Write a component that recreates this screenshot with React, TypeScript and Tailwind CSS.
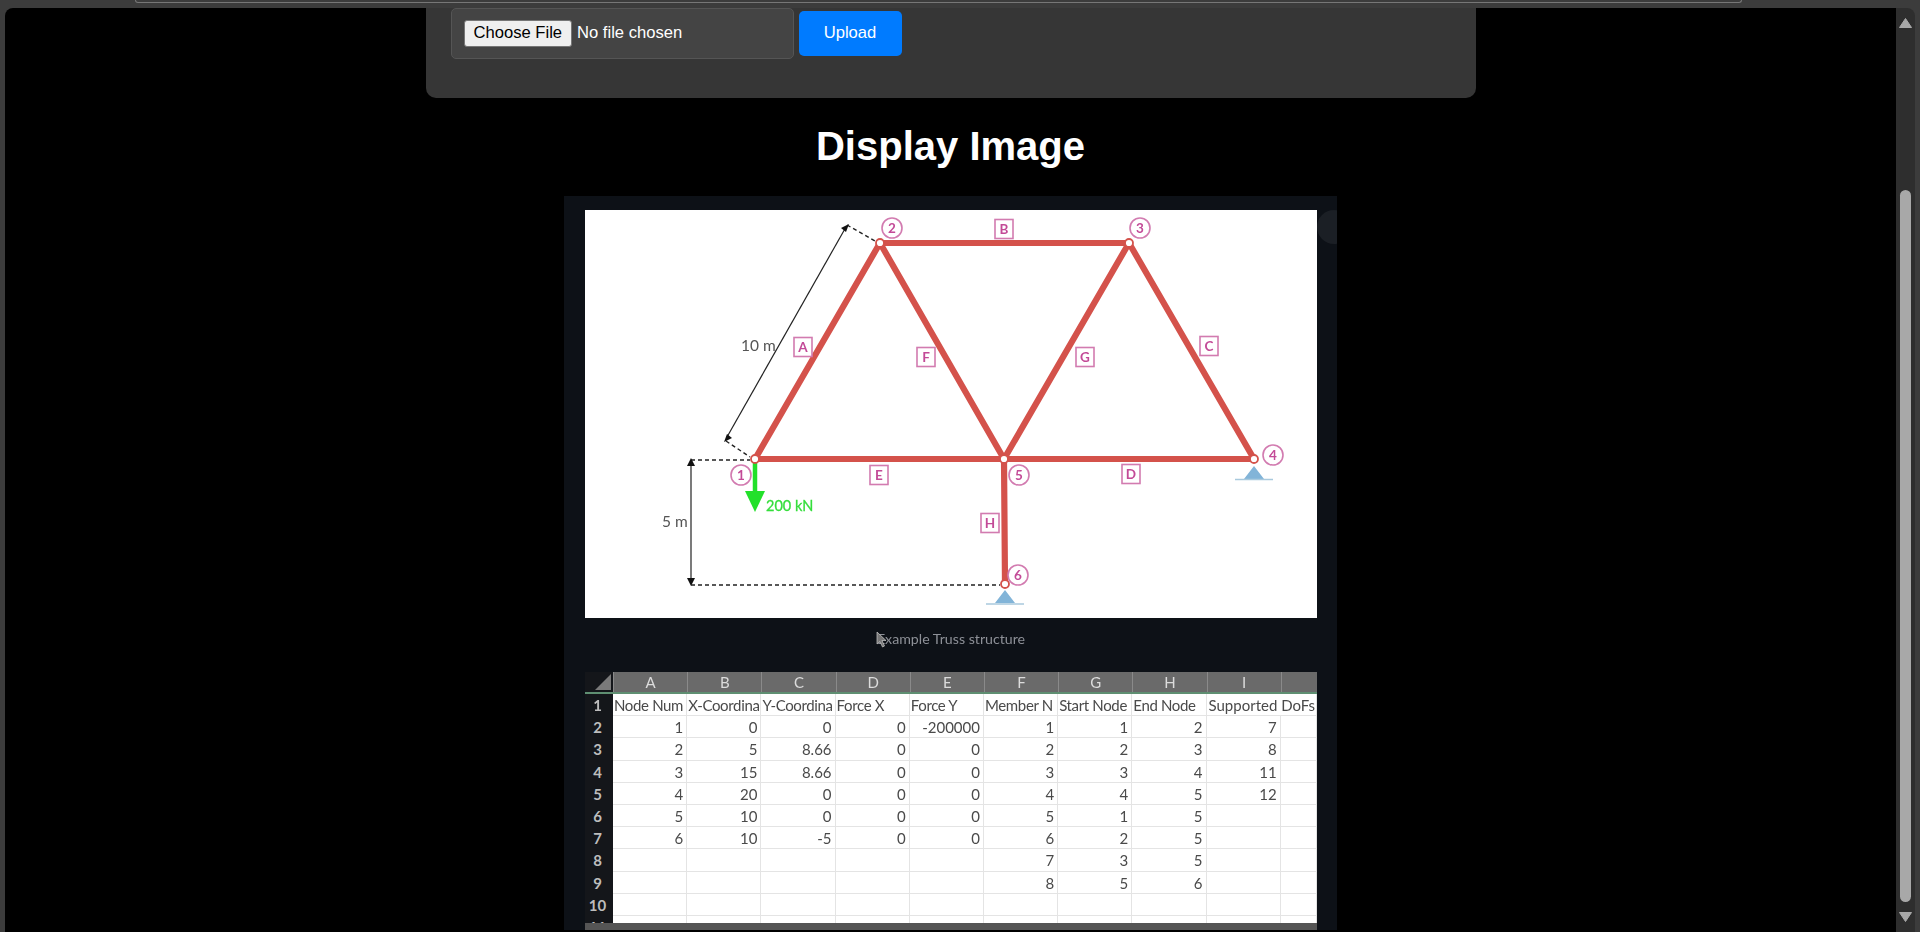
import React from "react";

const FONT = "font-['Liberation_Sans',Arial,sans-serif]";
const SHEET = "font-['Lato','Noto_Sans',sans-serif]";

const circles: [string, number, number][] = [
  ["1", 741, 475],
  ["2", 892, 228],
  ["3", 1140, 228],
  ["4", 1273, 455],
  ["5", 1019, 475],
  ["6", 1018, 575],
];
const boxes: [string, number, number][] = [
  ["A", 803, 347],
  ["B", 1004, 229],
  ["C", 1209, 346],
  ["D", 1131, 474],
  ["E", 879, 475],
  ["F", 926, 357],
  ["G", 1085, 357],
  ["H", 990, 523],
];
const members: [number, number, number, number][] = [
  [755, 459, 880, 243],
  [880, 243, 1129, 243],
  [1129, 243, 1254, 459],
  [755, 459, 1254, 459],
  [880, 243, 1004, 459],
  [1129, 243, 1004, 459],
  [1004, 459, 1005, 584],
];
const nodes: [number, number][] = [
  [755, 459],
  [880, 243],
  [1129, 243],
  [1254, 459],
  [1004, 459],
  [1005, 584],
];

function Truss() {
  return (
    <svg viewBox="585 210 732 408" className="block w-[732px] h-[408px] bg-white blur-[0.6px]">
      <g stroke="#222" fill="none" strokeWidth="1.2">
        <path d="M727 437 L846 227" />
        <path d="M691 462 L691 582" />
      </g>
      <g stroke="#222" fill="none" strokeWidth="1.4" strokeDasharray="4 3">
        <path d="M847 225 L875 241" />
        <path d="M726 441 L750 457" />
        <path d="M691 460 L750 460" />
        <path d="M691 585 L1000 585" />
      </g>
      <g fill="#111">
        <path d="M849 224 L841 228 L846 232 Z" />
        <path d="M724 442 L732 438 L727 434 Z" />
        <path d="M691 458 L687 466 L695 466 Z" />
        <path d="M691 586 L687 578 L695 578 Z" />
      </g>
      <text x="741" y="351" fontSize="15.5" fill="#555" fontFamily="Lato, sans-serif">10 m</text>
      <text x="662" y="527" fontSize="15.5" fill="#555" fontFamily="Lato, sans-serif">5 m</text>
      <path d="M755 461 L755 498" stroke="#22e02a" strokeWidth="4.5" />
      <path d="M745 491 L765 491 L755 512 Z" fill="#22e02a" />
      <text x="766" y="511" fontSize="14.5" fill="#35de3c" stroke="#35de3c" strokeWidth="0.3" fontFamily="Lato, sans-serif">200 kN</text>
      <path d="M1254 466 L1264 479 L1244 479 Z M1005 590 L1015 603 L995 603 Z" fill="#82b4d8" />
      <path d="M1235 479.5 L1273 479.5 M986 604 L1024 604" stroke="#a9c9dd" strokeWidth="1.5" />
      <g stroke="#d4524b" strokeWidth="6.2" strokeLinecap="round">
        {members.map(([a, b, c, d], i) => (
          <line key={i} x1={a} y1={b} x2={c} y2={d} />
        ))}
      </g>
      {nodes.map(([x, y], i) => (
        <circle key={i} cx={x} cy={y} r="4" fill="#fff" stroke="#d4524b" strokeWidth="1.8" />
      ))}
      <g fontFamily="Lato, sans-serif" fontSize="13.5" fontWeight="700" textAnchor="middle" fill="#c34a97">
        {circles.map(([t, x, y]) => (
          <g key={t}>
            <circle cx={x} cy={y} r="10" fill="#fff" stroke="#d27bb0" strokeWidth="1.6" />
            <text x={x} y={y + 4.8}>{t}</text>
          </g>
        ))}
        {boxes.map(([t, x, y]) => (
          <g key={t}>
            <rect x={x - 9} y={y - 9.5} width="18" height="19" fill="#fff" stroke="#d27bb0" strokeWidth="1.6" />
            <text x={x} y={y + 4.8}>{t}</text>
          </g>
        ))}
      </g>
    </svg>
  );
}

const letters = ["A", "B", "C", "D", "E", "F", "G", "H", "I", ""];
const rows: (string | number)[][] = [
  [1, 0, 0, 0, -200000, 1, 1, 2, 7, ""],
  [2, 5, 8.66, 0, 0, 2, 2, 3, 8, ""],
  [3, 15, 8.66, 0, 0, 3, 3, 4, 11, ""],
  [4, 20, 0, 0, 0, 4, 4, 5, 12, ""],
  [5, 10, 0, 0, 0, 5, 1, 5, "", ""],
  [6, 10, -5, 0, 0, 6, 2, 5, "", ""],
  ["", "", "", "", "", 7, 3, 5, "", ""],
  ["", "", "", "", "", 8, 5, 6, "", ""],
  ["", "", "", "", "", "", "", "", "", ""],
];
const titles = ["Node Num", "X-Coordina", "Y-Coordina", "Force X", "Force Y", "Member N", "Start Node", "End Node"];

const GRID = "grid grid-cols-[28px_repeat(9,74.2px)_36px]";
const ROWH = "h-[22.2px]";
const CELL = `${ROWH} border-r border-b border-[#e4e4e4] overflow-hidden whitespace-nowrap leading-[23px] text-[15px] text-[#4a4a4a]`;
const RH = `${ROWH} bg-[#14161a] text-[#bdbdbd] font-bold text-[15px] leading-[23px] text-center pr-[3px]`;

function Sheet() {
  return (
    <div className={`w-[732px] h-[251px] overflow-hidden blur-[0.5px] ${SHEET}`}>
      <div className={`${GRID} h-[22px] border-b-2 border-[#5f8f72]`}>
        <div className="bg-[#14161a] flex items-end justify-end pr-[2px] pb-[2px]">
          <svg width="16" height="16" viewBox="0 0 16 16"><path d="M16 0 L16 16 L0 16 Z" fill="#7a7a7a" /></svg>
        </div>
        {letters.map((l, i) => (
          <div key={i} className="bg-[#6a6a6a] border-l border-[#8a8a8a] text-center text-[#dcdcdc] text-[15px] leading-[20px]">{l}</div>
        ))}
      </div>
      <div className={`${GRID} bg-white`}>
        <div className={RH}>1</div>
        {titles.map((t) => (
          <div key={t} className={`${CELL} pl-[1px] tracking-[-0.35px]`}>{t}</div>
        ))}
        <div className={`${CELL} col-span-2 pl-[2px]`}>Supported DoFs</div>
        {rows.map((r, i) => (
          <React.Fragment key={i}>
            <div className={RH}>{i + 2}</div>
            {r.map((v, j) => (
              <div key={j} className={`${CELL} text-right pr-[3px]`}>{v}</div>
            ))}
          </React.Fragment>
        ))}
        <div className={RH}>11</div>
        {letters.map((_, j) => (
          <div key={j} className={`${CELL}`} />
        ))}
      </div>
    </div>
  );
}

export default function App() {
  return (
    <div className={`h-[932px] w-full overflow-hidden flex flex-col bg-[#3c3c3c] ${FONT}`}>
      <div className="h-[8px] shrink-0">
        <div className="h-[3px] ml-[135px] mr-[178px] border-b border-x border-[#777] rounded-b-[8px]" />
      </div>
      <div className="flex-1 min-h-0 flex pl-[5px] pr-[5px]">
        <main className="flex-1 min-w-0 bg-black rounded-tl-[8px] overflow-hidden flex flex-col items-center">
          <section className="w-[1050px] shrink-0 bg-[#363636] rounded-b-[10px] px-[25px] pb-[39px] flex items-start gap-[5px]">
            <input
              type="file"
              className="w-[343px] h-[51px] bg-[#444444] border border-[#555] rounded-[5px] px-[12px] pt-[11px] pb-[13px] text-white text-[16.6px] file:bg-[#efefef] file:text-black file:border file:border-[#767676] file:rounded-[3px] file:h-[27px] file:px-[9px] file:mr-[5px] file:text-[16.6px]"
            />
            <button className="w-[103px] h-[45px] mt-[3px] pb-[1px] bg-[#007bff] rounded-[5px] text-white text-[16.6px]">Upload</button>
          </section>
          <h1 className="mt-[25px] mb-[27px] text-[40px] leading-[46px] font-bold text-white">Display Image</h1>
          <div className="relative w-[773px] shrink-0 bg-[#0d1117] px-[21px] pt-[14px] overflow-hidden">
            <div className="absolute right-[-14px] top-[14px] w-[34px] h-[34px] rounded-full bg-[#1b1f25]" />
            <div className="relative w-[732px]">
              <Truss />
              <div className="relative h-[54px] pt-[10px] text-center text-[14.2px] leading-[21px] text-[#8d9097] font-['Lato',sans-serif] blur-[0.3px]">
                Example Truss structure
                <svg className="absolute left-[291px] top-[13px]" width="12" height="18" viewBox="0 0 12 18">
                  <path d="M1 1 L1 13 L4 10.5 L6.5 16 L8.5 15 L6 9.5 L10 9.5 Z" fill="#777" stroke="#ccc" strokeWidth="0.7" />
                </svg>
              </div>
              <Sheet />
              <div className="h-[7px] bg-[#555]" />
            </div>
          </div>
        </main>
        <aside className="w-[19px] shrink-0 bg-[#2e2e2e] rounded-tr-[8px] flex flex-col items-center justify-between pt-[10px] pb-[10px]">
          <svg width="13" height="10" viewBox="0 0 13 10"><path d="M6.5 0.5 L12.5 9.5 L0.5 9.5 Z" fill="#a8a8a8" stroke="#a8a8a8" strokeLinejoin="round" /></svg>
          <div className="w-[11px] h-[712px] mt-[152px] bg-[#a8a8a8] rounded-full" />
          <svg width="13" height="10" viewBox="0 0 13 10"><path d="M0.5 0.5 L12.5 0.5 L6.5 9.5 Z" fill="#a8a8a8" stroke="#a8a8a8" strokeLinejoin="round" /></svg>
        </aside>
      </div>
    </div>
  );
}
